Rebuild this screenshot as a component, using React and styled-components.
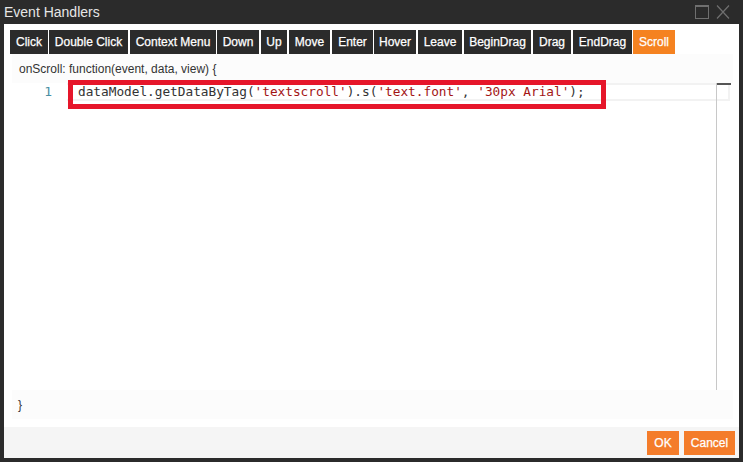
import React from 'react';
import styled, { createGlobalStyle } from 'styled-components';

const Global = createGlobalStyle`
  html, body { margin: 0; padding: 0; background: #2b2b2b; }
  body { font-family: "Liberation Sans", Arial, sans-serif; }
`;

const Win = styled.div`
  width: 743px;
  height: 462px;
  background: #2b2b2b;
  display: flex;
  flex-direction: column;
  box-sizing: border-box;
  padding: 0 4px 4px;
  overflow: hidden;
`;

const TitleBar = styled.div`
  height: 24px;
  display: flex;
  align-items: center;
  justify-content: space-between;
  color: #e6e6e6;
  font-size: 14px;
  padding-right: 9px;
`;

const WinIcons = styled.div`
  display: flex;
  align-items: center;
  gap: 7px;
`;

const Body = styled.div`
  flex: 1;
  background: #fff;
  display: flex;
  flex-direction: column;
  min-height: 0;
`;

const Tabs = styled.div`
  display: flex;
  gap: 1px;
  padding: 6px 0 0 6px;
  height: 24px;
`;

const Tab = styled.div`
  height: 24px;
  width: ${p => p.$w}px;
  margin-right: ${p => p.$gap || 0}px;
  background: ${p => (p.$active ? '#f58220' : '#2b2b2b')};
  color: #fff;
  font-size: 12px;
  -webkit-text-stroke: 0.25px #fff;
  display: flex;
  align-items: center;
  justify-content: center;
  white-space: nowrap;
`;

const EditorPanel = styled.div`
  position: relative;
  margin: 0 6px 0 8px;
  height: 365px;
  background: #fcfcfc;
  display: flex;
  flex-direction: column;
`;

const Signature = styled.div`
  height: 29px;
  padding-left: 7px;
  display: flex;
  align-items: center;
  font-size: 12px;
  color: #333;
`;

const Code = styled.div`
  height: 307px;
  background: #fff;
  position: relative;
  display: flex;
  align-items: flex-start;
`;

const LineNo = styled.span`
  width: 40px;
  flex: none;
  line-height: 17px;
  text-align: right;
  color: #4a90a4;
  font-size: 13px;
  font-family: "DejaVu Sans Mono", monospace;
`;

const ActiveLine = styled.div`
  flex: 1;
  height: 18px;
  box-sizing: border-box;
  border: 2px solid #f2f2f2;
  border-left: none;
  margin: 0 3px 0 15px;
  padding-left: 11px;
  font-size: 12.75px;
  line-height: 13px;
  font-family: "DejaVu Sans Mono", monospace;
  color: #333;
  white-space: pre;
`;

const Str = styled.span`
  color: #a31515;
`;

const Overview = styled.div`
  position: absolute;
  top: 0;
  right: 0;
  width: 16px;
  height: 100%;
  border-left: 1px solid #c8c8c8;

  &::before {
    content: '';
    position: absolute;
    left: 0;
    right: 2px;
    top: 0;
    height: 2px;
    background: #555;
  }
`;

const Highlight = styled.div`
  position: absolute;
  left: 56px;
  top: 26px;
  width: 538px;
  height: 29px;
  box-sizing: border-box;
  border: 5px solid #e6162a;
  pointer-events: none;
`;

const Closing = styled.div`
  height: 29px;
  padding-left: 6px;
  display: flex;
  align-items: center;
  font-size: 12px;
  color: #333;
`;

const Footer = styled.div`
  margin-top: 8px;
  height: 31px;
  background: #f5f5f5;
  display: flex;
  justify-content: flex-end;
  align-items: flex-start;
  gap: 5px;
  padding: 4px 4px 0 0;
  box-sizing: border-box;
`;

const Btn = styled.div`
  background: #f47c2a;
  color: #fff;
  font-size: 12px;
  -webkit-text-stroke: 0.25px #fff;
  height: 24px;
  width: ${p => p.$w}px;
  display: flex;
  align-items: center;
  justify-content: center;
`;

const tabs = [
  ['Click', 38, 0], ['Double Click', 79, 1], ['Context Menu', 86, 0], ['Down', 42, 1],
  ['Up', 26, 1], ['Move', 41, 1], ['Enter', 41, 0], ['Hover', 42, 1], ['Leave', 44, 1],
  ['BeginDrag', 67, 1], ['Drag', 38, 1], ['EndDrag', 59, 0],
];

export default function App() {
  return (
    <Win>
      <Global />
      <TitleBar>
        <span>Event Handlers</span>
        <WinIcons>
          <svg width="14" height="14" viewBox="0 0 14 14">
            <rect x="0.5" y="0.5" width="13" height="13" fill="none" stroke="#6f6f6f" />
            <rect x="0" y="0" width="14" height="2" fill="#6f6f6f" />
          </svg>
          <svg width="14" height="14" viewBox="0 0 14 14">
            <path d="M1 0.5 L13 13.5 M13 0.5 L1 13.5" stroke="#6f6f6f" strokeWidth="1.2" fill="none" />
          </svg>
        </WinIcons>
      </TitleBar>
      <Body>
        <Tabs>
          {tabs.map(([label, w, gap]) => (
            <Tab key={label} $w={w} $gap={gap}>{label}</Tab>
          ))}
          <Tab $w={42} $active>Scroll</Tab>
        </Tabs>
        <EditorPanel>
          <Signature>onScroll: function(event, data, view) {'{'}</Signature>
          <Code>
            <LineNo>1</LineNo>
            <ActiveLine>
              dataModel.getDataByTag(<Str>'textscroll'</Str>).s(<Str>'text.font'</Str>, <Str>'30px Arial'</Str>);
            </ActiveLine>
            <Overview />
          </Code>
          <Closing>{'}'}</Closing>
          <Highlight />
        </EditorPanel>
        <Footer>
          <Btn $w={32}>OK</Btn>
          <Btn $w={51}>Cancel</Btn>
        </Footer>
      </Body>
    </Win>
  );
}
